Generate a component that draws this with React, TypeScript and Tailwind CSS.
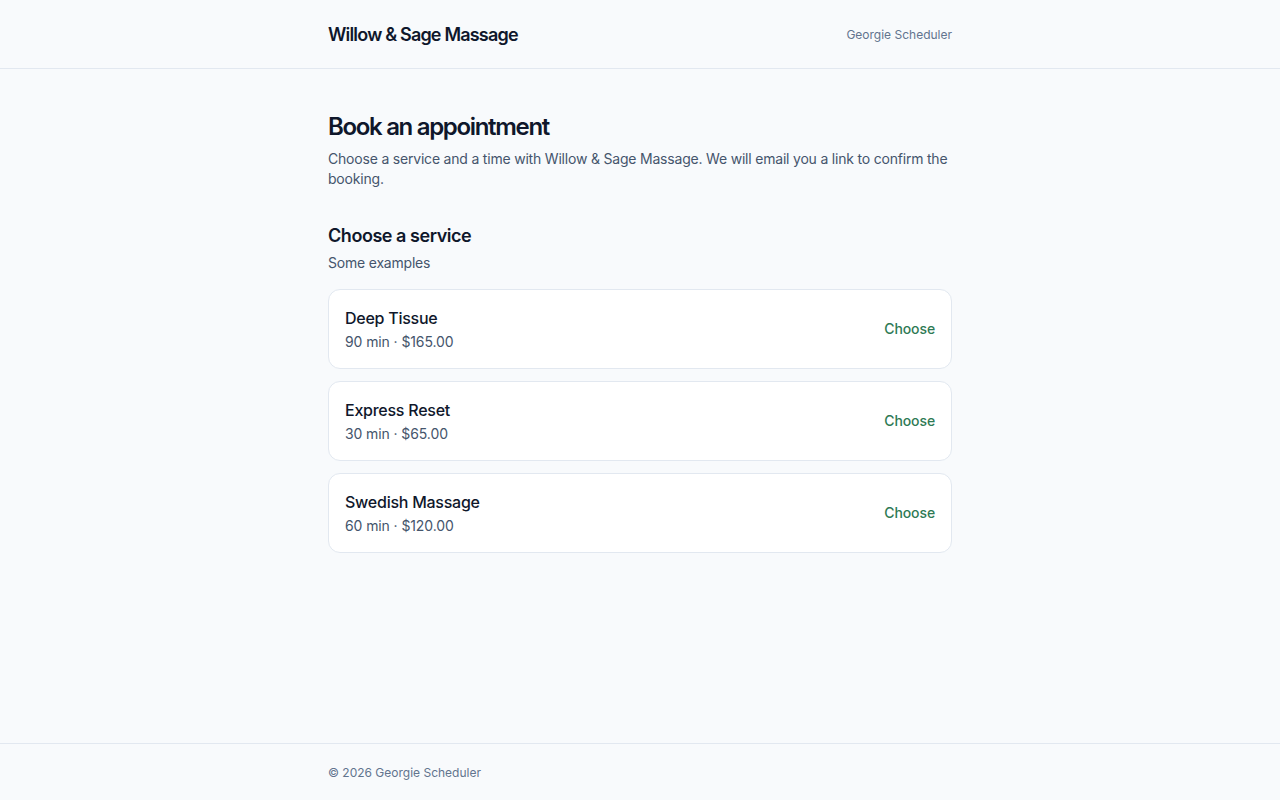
const services = [
  { name: "Deep Tissue", duration: "90 min", price: "$165.00" },
  { name: "Express Reset", duration: "30 min", price: "$65.00" },
  { name: "Swedish Massage", duration: "60 min", price: "$120.00" },
];

const App = () => {
  return (
    <div className="min-h-screen flex flex-col bg-slate-50 text-slate-900 font-['Inter','Liberation_Sans',sans-serif]">
      <header className="border-b border-slate-200">
        <div className="mx-auto w-[624px] h-[68px] pt-[2px] flex items-center justify-between">
          <span className="text-lg font-semibold tracking-[-0.045em]">Willow &amp; Sage Massage</span>
          <span className="text-xs text-slate-500">Georgie Scheduler</span>
        </div>
      </header>

      <main className="flex-1">
        <div className="mx-auto w-[624px] pt-[42px]">
          <h1 className="text-2xl font-semibold tracking-[-0.055em]">Book an appointment</h1>
          <p className="mt-1.5 text-sm leading-5 tracking-[-0.2px] text-slate-600">
            Choose a service and a time with Willow &amp; Sage Massage. We will email you a link to confirm the
            booking.
          </p>

          <h2 className="mt-[33px] text-lg font-semibold tracking-tight">Choose a service</h2>
          <p className="mt-[3px] text-sm tracking-[-0.2px] text-slate-600">Some examples</p>

          <div className="mt-4 flex flex-col gap-3">
            {services.map((s) => (
              <div
                key={s.name}
                className="flex items-center justify-between rounded-xl border border-slate-200 bg-white px-4 py-4"
              >
                <div>
                  <div className="text-base font-medium leading-6 tracking-[-0.25px]">{s.name}</div>
                  <div className="mt-0.5 text-sm tracking-[-0.1px] text-slate-600">
                    {s.duration} · {s.price}
                  </div>
                </div>
                <button className="text-sm font-medium tracking-[-0.1px] text-[#2f7a55]">Choose</button>
              </div>
            ))}
          </div>
        </div>
      </main>

      <footer className="border-t border-slate-200">
        <div className="mx-auto w-[624px] pt-[21px] pb-[19px] text-xs text-slate-500">© 2026 Georgie Scheduler</div>
      </footer>
    </div>
  );
};

export default App;
